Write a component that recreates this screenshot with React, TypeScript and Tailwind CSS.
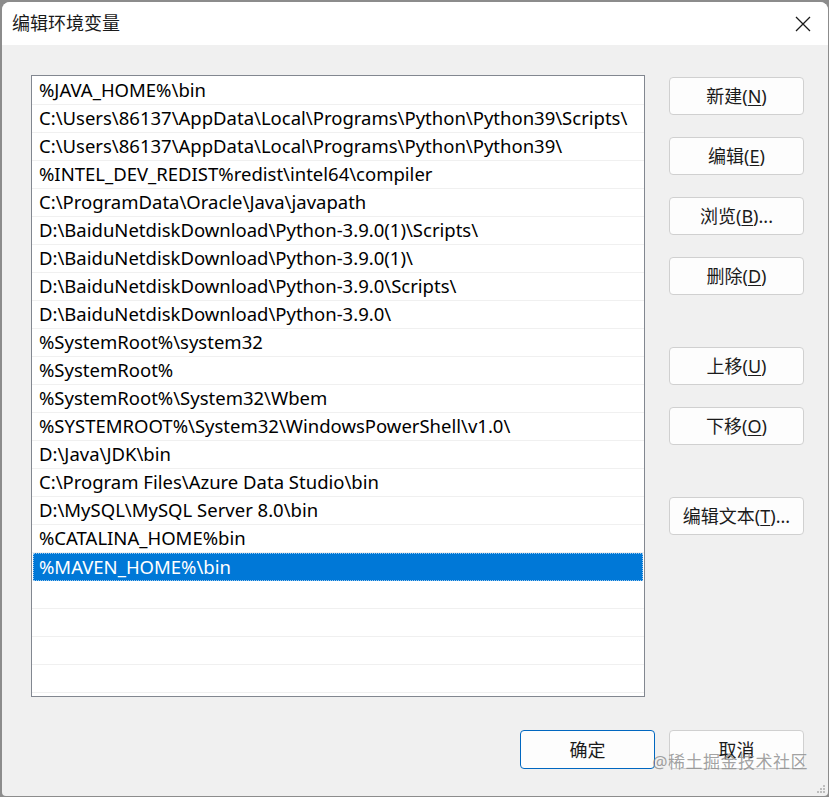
import React from 'react';

const paths = [
  '%JAVA_HOME%\\bin',
  'C:\\Users\\86137\\AppData\\Local\\Programs\\Python\\Python39\\Scripts\\',
  'C:\\Users\\86137\\AppData\\Local\\Programs\\Python\\Python39\\',
  '%INTEL_DEV_REDIST%redist\\intel64\\compiler',
  'C:\\ProgramData\\Oracle\\Java\\javapath',
  'D:\\BaiduNetdiskDownload\\Python-3.9.0(1)\\Scripts\\',
  'D:\\BaiduNetdiskDownload\\Python-3.9.0(1)\\',
  'D:\\BaiduNetdiskDownload\\Python-3.9.0\\Scripts\\',
  'D:\\BaiduNetdiskDownload\\Python-3.9.0\\',
  '%SystemRoot%\\system32',
  '%SystemRoot%',
  '%SystemRoot%\\System32\\Wbem',
  '%SYSTEMROOT%\\System32\\WindowsPowerShell\\v1.0\\',
  'D:\\Java\\JDK\\bin',
  'C:\\Program Files\\Azure Data Studio\\bin',
  'D:\\MySQL\\MySQL Server 8.0\\bin',
  '%CATALINA_HOME%bin',
  '%MAVEN_HOME%\\bin',
];

const font = { fontFamily: '"Noto Sans", "Noto Sans CJK SC", sans-serif' };

function Btn({ label, hotkey, suffix = '', primary = false, className = '' }: { label: string; hotkey?: string; suffix?: string; primary?: boolean; className?: string }) {
  return (
    <button
      className={
        'w-[135px] h-[38px] rounded-[4px] bg-[#fdfdfd] text-[18px] text-[#1b1b1b] flex items-center justify-center leading-none ' +
        (primary ? 'border border-[#0067c0] ' : 'border border-[#d0d0d0] ') +
        className
      }
    >
      {label}
      {hotkey && (
        <>
          (<span className="underline underline-offset-2">{hotkey}</span>){suffix}
        </>
      )}
    </button>
  );
}

export default function App() {
  const emptyRows = 4;
  return (
    <div className="w-[829px] h-[797px] bg-[#8c8c8c] pl-[2px] pt-[2px] overflow-hidden" style={font}>
      <div className="w-[826px] h-[794px] rounded-t-[8px] rounded-b-[4px] bg-[#f0f0f0] flex flex-col overflow-hidden relative">
        {/* title bar */}
        <div className="h-[43px] bg-white flex items-center justify-between pl-[10px] pr-[14px]">
          <span className="text-[18px] text-[#1a1a1a]">编辑环境变量</span>
          <svg width="18" height="18" viewBox="0 0 18 18" className="mr-[2px]">
            <path d="M2 2 L16 16 M16 2 L2 16" stroke="#1a1a1a" strokeWidth="1.3" fill="none" />
          </svg>
        </div>

        {/* body */}
        <div className="flex pl-[29px] pt-[30px] gap-[24px]">
          <div className="w-[614px] h-[622px] bg-white border border-[#828790] py-[1px] overflow-hidden">
            {paths.map((p, i) => {
              const sel = i === paths.length - 1;
              return (
                <div
                  key={i}
                  className={
                    'h-[28px] flex items-center ' +
                    (sel
                      ? 'bg-[#0078d7] text-white mx-[1px] pl-[6px] outline outline-1 outline-dotted outline-[#9cc8ee] -outline-offset-1'
                      : 'text-[#000] pl-[7px] border-b border-[#f0f0f0]')
                  }
                >
                  <span className="text-[18.5px] whitespace-nowrap leading-none">{p}</span>
                </div>
              );
            })}
            {Array.from({ length: emptyRows }).map((_, i) => (
              <div key={'e' + i} className="h-[28px] border-b border-[#f0f0f0]" />
            ))}
          </div>

          <div className="flex flex-col mt-[2px]">
            <Btn label="新建" hotkey="N" />
            <Btn label="编辑" hotkey="E" className="mt-[22px]" />
            <Btn label="浏览" hotkey="B" suffix="..." className="mt-[22px]" />
            <Btn label="删除" hotkey="D" className="mt-[22px]" />
            <Btn label="上移" hotkey="U" className="mt-[52px]" />
            <Btn label="下移" hotkey="O" className="mt-[22px]" />
            <Btn label="编辑文本" hotkey="T" suffix="..." className="mt-[52px]" />
          </div>
        </div>

        {/* footer */}
        <div className="flex justify-end gap-[14px] pr-[24px] mt-[33px]">
          <Btn label="确定" primary className="h-[39px]" />
          <Btn label="取消" className="h-[39px]" />
        </div>

        {/* watermark */}
        <div className="absolute right-[20px] bottom-[22px] text-[17px] text-[#8a8a8a]/80 tracking-[0.5px] pointer-events-none">
          @稀土掘金技术社区
        </div>

        {/* resize grip */}
        <svg width="10" height="10" viewBox="0 0 10 10" className="absolute right-[2px] bottom-[2px]">
          <rect x="7" y="1" width="2" height="2" fill="#bdbdbd" />
          <rect x="4" y="4" width="2" height="2" fill="#bdbdbd" />
          <rect x="7" y="4" width="2" height="2" fill="#bdbdbd" />
          <rect x="1" y="7" width="2" height="2" fill="#bdbdbd" />
          <rect x="4" y="7" width="2" height="2" fill="#bdbdbd" />
          <rect x="7" y="7" width="2" height="2" fill="#bdbdbd" />
        </svg>
      </div>
    </div>
  );
}
